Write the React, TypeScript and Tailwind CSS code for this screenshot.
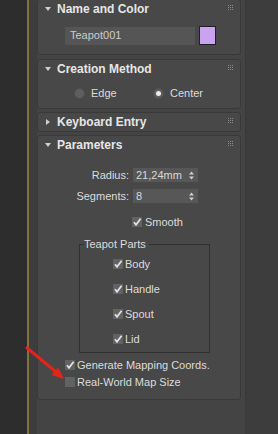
import React from "react";

function Dots() {
  const pts = [0, 2, 4];
  return (
    <svg width="5" height="5" className="ml-auto mr-[7px] self-start mt-[5px]">
      {pts.map((y) =>
        pts.map((x) => <rect key={`${x}-${y}`} x={x} y={y} width="1" height="1" fill="#8a8a8a" />)
      )}
    </svg>
  );
}

function Header({ title, open = true }: { title: string; open?: boolean }) {
  return (
    <div className="flex h-[18px] items-center pl-[7px]">
      <svg width="6" height="6" viewBox="0 0 6 6" className="shrink-0">
        {open ? <polygon points="0,1 6,1 3,5" fill="#cfcfcf" /> : <polygon points="1,0 5,3 1,6" fill="#cfcfcf" />}
      </svg>
      <span className="ml-[6px] text-[12px] font-bold leading-none text-[#e6e6e6]">{title}</span>
      <Dots />
    </div>
  );
}

function Check({ checked = true }: { checked?: boolean }) {
  return (
    <div className="flex h-[10px] w-[10px] shrink-0 items-center justify-center bg-[#626262]">
      {checked && (
        <svg width="10" height="10" viewBox="0 0 10 10">
          <path d="M2 5.2 L4 7.8 L8.6 1.8" stroke="#e4e4e4" strokeWidth="1.7" fill="none" />
        </svg>
      )}
    </div>
  );
}

function CheckRow({ label, checked = true, className = "" }: { label: string; checked?: boolean; className?: string }) {
  return (
    <div className={`flex h-[14px] items-center gap-[2px] ${className}`}>
      <Check checked={checked} />
      <span className="leading-none text-[#dcdcdc]">{label}</span>
    </div>
  );
}

function Radio({ selected }: { selected?: boolean }) {
  return (
    <div className="flex h-[11px] w-[11px] shrink-0 items-center justify-center rounded-full border border-[#4e4e4e] bg-[#5e5e5e]">
      {selected && <div className="h-[5px] w-[5px] rounded-full bg-[#ececec]" />}
    </div>
  );
}

function Spinner({ value }: { value: string }) {
  return (
    <div className="flex h-[14px] w-[65px] items-center bg-[#575757] pl-[3px] pr-[4px]">
      <span className="leading-none text-[#d8d8d8]">{value}</span>
      <svg width="5" height="9" viewBox="0 0 5 9" className="ml-auto">
        <polygon points="0,3.5 5,3.5 2.5,0.5" fill="#d0d0d0" />
        <polygon points="0,5.5 5,5.5 2.5,8.5" fill="#d0d0d0" />
      </svg>
    </div>
  );
}

const rollout = "rounded-[3px] border border-[#393939] bg-[#484848]";

export default function App() {
  return (
    <div className="relative flex h-[434px] w-[278px] overflow-hidden font-['Liberation_Sans',Arial,sans-serif] text-[11px]">
      <div className="w-[27px] bg-[#2d2d2d]" />
      <div className="w-[2px] bg-[#85703f]" />
      <div className="w-[8px] bg-[#3d3d3d]" />
      <div className="flex w-[208px] flex-col bg-[#444444] pr-[4px]">
        <div className={`-mt-px pb-[9px] ${rollout}`}>
          <Header title="Name and Color" />
          <div className="ml-[27px] mt-[8px] flex items-center">
            <div className="flex h-[18px] w-[130px] items-center bg-[#555555] pl-[5px] text-[#cccccc]">Teapot001</div>
            <div className="ml-[4px] h-[19px] w-[17px] border border-[#202020] bg-[#c9a2f0]" />
          </div>
        </div>

        <div className={`mt-[4px] pb-[8px] ${rollout}`}>
          <Header title="Creation Method" />
          <div className="ml-[36px] mt-[8px] flex h-[14px] items-center">
            <div className="flex w-[79px] items-center gap-[6px]">
              <Radio />
              <span className="leading-none text-[#dcdcdc]">Edge</span>
            </div>
            <div className="flex items-center gap-[6px]">
              <Radio selected />
              <span className="leading-none text-[#dcdcdc]">Center</span>
            </div>
          </div>
        </div>

        <div className={`mt-[3px] ${rollout}`}>
          <Header title="Keyboard Entry" open={false} />
        </div>

        <div className={`mt-[3px] pb-[10px] ${rollout}`}>
          <Header title="Parameters" />
          <div className="mt-[14px] flex h-[14px] items-center gap-[4px]">
            <span className="w-[91px] text-right leading-none text-[#dcdcdc]">Radius:</span>
            <Spinner value="21,24mm" />
          </div>
          <div className="mt-[7px] flex h-[14px] items-center gap-[4px]">
            <span className="w-[91px] text-right leading-none text-[#dcdcdc]">Segments:</span>
            <Spinner value="8" />
          </div>
          <CheckRow label="Smooth" className="ml-[94px] mt-[12px] gap-[3px]" />

          <fieldset className="ml-[41px] mt-[8px] w-[131px] border border-[#303030] pb-[6px]">
            <legend className="ml-[4px] pr-[3px] leading-[14px] text-[#dcdcdc]">Teapot Parts</legend>
            <div className="pl-[33px]">
              <CheckRow label="Body" className="mt-[6px]" />
              <CheckRow label="Handle" className="mt-[11px]" />
              <CheckRow label="Spout" className="mt-[11px]" />
              <CheckRow label="Lid" className="mt-[11px]" />
            </div>
          </fieldset>

          <CheckRow label="Generate Mapping Coords." className="ml-[27px] mt-[5px]" />
          <CheckRow label="Real-World Map Size" checked={false} className="ml-[27px] mt-[3px]" />
        </div>
      </div>
      <div className="w-px bg-[#383838]" />
      <div className="flex-1 bg-[#3d3d3d]" />

      <svg width="278" height="434" className="pointer-events-none absolute left-0 top-0">
        <line x1="26" y1="347" x2="56" y2="372" stroke="#e3241b" strokeWidth="3" />
        <polygon points="64,379 51.6,375.1 58,367.5" fill="#e3241b" />
      </svg>
    </div>
  );
}
